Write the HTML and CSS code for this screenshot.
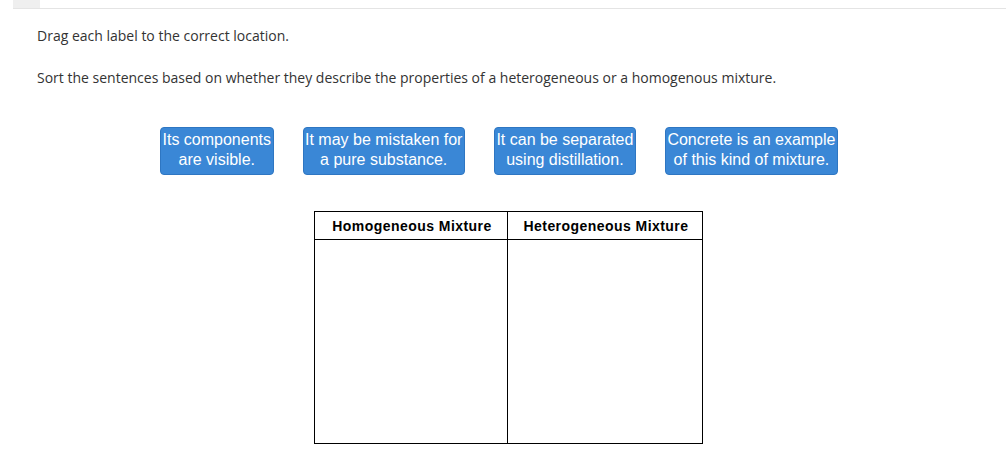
FILE: index.html
```html
<!DOCTYPE html>
<html>
<head>
<meta charset="utf-8">
<link rel="stylesheet" href="styles.css">
</head>
<body>
<div class="topbar"><div class="tab"></div></div>
<div class="content">
  <p class="instr first">Drag each label to the correct location.</p>
  <p class="instr second">Sort the sentences based on whether they describe the properties of a heterogeneous or a homogenous mixture.</p>
  <div class="labels">
    <div class="label">Its components<br>are visible.</div>
    <div class="label">It may be mistaken for<br>a pure substance.</div>
    <div class="label">It can be separated<br>using distillation.</div>
    <div class="label">Concrete is an example<br>of this kind of mixture.</div>
  </div>
  <div class="tablewrap">
    <table class="sort">
      <thead>
        <tr><th class="c1">Homogeneous Mixture</th><th class="c2">Heterogeneous Mixture</th></tr>
      </thead>
      <tbody>
        <tr><td class="c1"></td><td class="c2"></td></tr>
      </tbody>
    </table>
  </div>
</div>
</body>
</html>
```
FILE: styles.css
```css
html, body { margin: 0; padding: 0; background: #fff; }
body { font-family: "Open Sans", sans-serif; color: #333; }
.topbar { margin-left: 13px; height: 8px; border-bottom: 1px solid #e4e4e4; }
.tab { width: 27px; height: 8px; background: #efefef; }
.content { padding-left: 37px; }
.instr { margin: 0; font-size: 14px; line-height: 20px; }
.first { padding-top: 17px; }
.second { padding-top: 22px; }
.labels { display: flex; gap: 29px; padding-left: 123px; margin-top: 39px; }
.label {
  font-family: "Liberation Sans", Arial, sans-serif;
  font-size: 16px; line-height: 20px; color: #fff;
  background: #3a87d6; border: 1px solid #2e76c2; border-radius: 4px;
  padding: 2px 1.5px 4px; text-align: center; white-space: nowrap;
}
.tablewrap { padding-left: 277px; margin-top: 36px; }
.sort { border-collapse: collapse; }
.sort th, .sort td { border: 1px solid #000; padding: 0; }
.sort th {
  font-family: "Liberation Sans", Arial, sans-serif; font-weight: bold;
  font-size: 14px; letter-spacing: 0.45px; color: #000; height: 27px; text-align: center;
  padding-left: 2px;
}
.sort td { height: 203px; }
.c1 { width: 190px; }
.c2 { width: 192px; }
```
